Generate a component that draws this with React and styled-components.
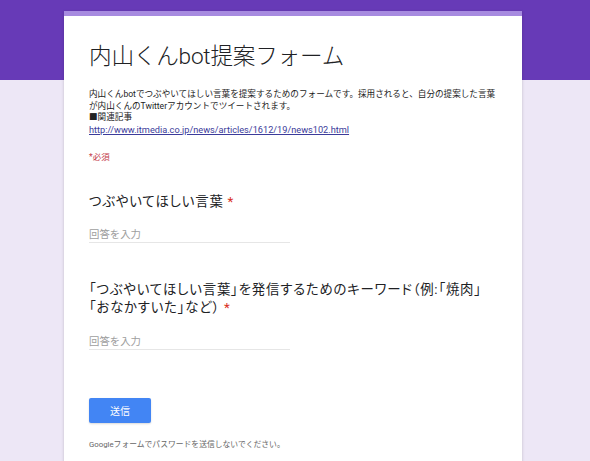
import React from "react";
import styled, { createGlobalStyle } from "styled-components";

const GlobalStyle = createGlobalStyle`
  html, body {
    margin: 0;
    padding: 0;
  }
  body {
    font-family: Roboto, "Noto Sans CJK JP", sans-serif;
    color: #202124;
  }
`;

const Page = styled.div`
  min-height: 461px;
  background: linear-gradient(#673ab7 0, #673ab7 80px, #ede7f6 80px, #ede7f6 100%);
  padding-top: 11px;
  box-sizing: border-box;
  overflow: hidden;
`;

const Card = styled.main`
  width: 458px;
  margin-left: 64px;
  background: #fff;
  border-top: 5px solid #a78be0;
  box-shadow: 0 1px 3px rgba(0, 0, 0, 0.18);
  padding: 26px 25px 30px 25px;
  box-sizing: border-box;
  min-height: 470px;
`;

const Title = styled.h1`
  margin: 0;
  font-size: 22.6px;
  line-height: 30px;
  font-weight: 300;
  color: #202124;
  letter-spacing: -0.2px;
`;

const Description = styled.div`
  margin-top: 17px;
  font-size: 8.6px;
  line-height: 11.5px;
  color: #222;
  width: 410px;
`;

const Link = styled.a`
  color: #3b3b9a;
  text-decoration: underline;
  font-size: 9.2px;
`;

const Required = styled.div`
  margin-top: 15px;
  font-size: 8.5px;
  line-height: 12px;
  color: #c43b4a;
`;

const Question = styled.section`
  margin-top: ${(p) => p.$gap}px;
`;

const QuestionTitle = styled.div`
  font-size: 13.4px;
  line-height: 18px;
  color: #202124;
  width: 398px;
  font-feature-settings: "palt";
  letter-spacing: 0.8px;
`;

const Star = styled.span`
  color: #d93025;
  margin-left: 4px;
`;

const Answer = styled.input`
  display: block;
  margin-top: ${(p) => p.$gap}px;
  width: 201px;
  box-sizing: border-box;
  border: none;
  border-bottom: 1px solid #e6e6e6;
  outline: none;
  padding: 0 0 1px 0;
  font-family: Roboto, "Noto Sans CJK JP", sans-serif;
  font-size: 10.4px;
  line-height: 14px;
  height: 16px;
  color: #202124;
  background: transparent;
  &::placeholder {
    color: #9e9e9e;
  }
`;

const SubmitButton = styled.button`
  display: block;
  margin-top: 48px;
  width: 62px;
  height: 25px;
  border: none;
  border-radius: 2px;
  background: #4285f4;
  color: #fff;
  font-family: Roboto, "Noto Sans CJK JP", sans-serif;
  font-size: 10px;
  padding: 0;
  box-shadow: 0 1px 2px rgba(0, 0, 0, 0.15);
`;

const Footnote = styled.p`
  margin: 16px 0 0 0;
  font-size: 7.8px;
  line-height: 12px;
  color: #666;
`;

export default function App() {
  return (
    <>
      <GlobalStyle />
      <Page>
        <Card>
          <Title>内山くんbot提案フォーム</Title>
          <Description>
            内山くんbotでつぶやいてほしい言葉を提案するためのフォームです。採用されると、自分の提案した言葉が内山くんのTwitterアカウントでツイートされます。
            <br />
            ■関連記事
            <br />
            <Link href="#">http://www.itmedia.co.jp/news/articles/1612/19/news102.html</Link>
          </Description>
          <Required>*必須</Required>
          <Question $gap={30}>
            <QuestionTitle>
              つぶやいてほしい言葉<Star>*</Star>
            </QuestionTitle>
            <Answer $gap={16} placeholder="回答を入力" />
          </Question>
          <Question $gap={38}>
            <QuestionTitle>
              「つぶやいてほしい言葉」を発信するためのキーワード（例:「焼肉」「おなかすいた」など）<Star>*</Star>
            </QuestionTitle>
            <Answer $gap={17} placeholder="回答を入力" />
          </Question>
          <SubmitButton>送信</SubmitButton>
          <Footnote>Googleフォームでパスワードを送信しないでください。</Footnote>
        </Card>
      </Page>
    </>
  );
}
